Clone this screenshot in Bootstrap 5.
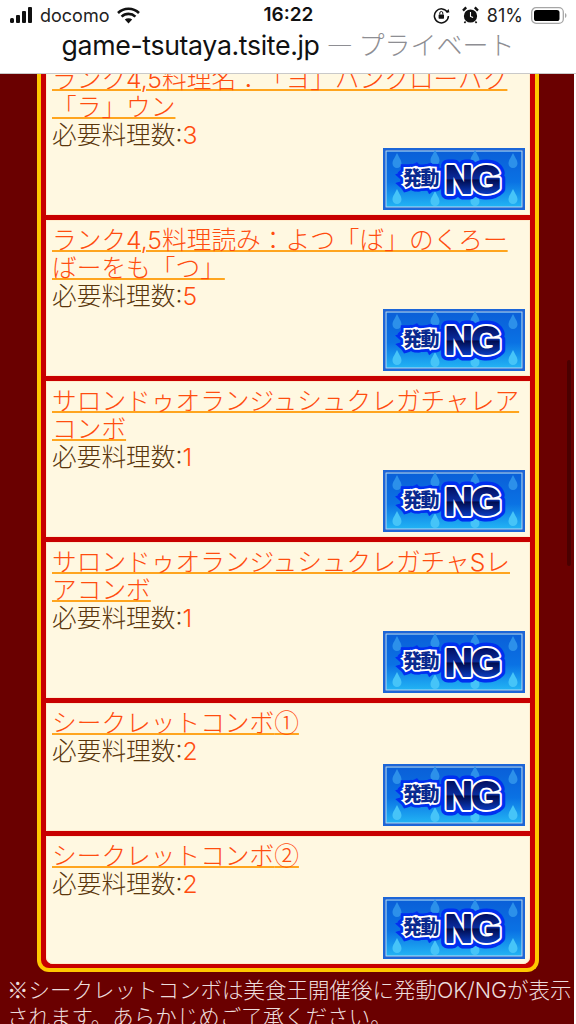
<!DOCTYPE html>
<html lang="ja">
<head>
<meta charset="utf-8">
<title>game-tsutaya</title>
<link rel="stylesheet" href="https://cdn.jsdelivr.net/npm/bootstrap@5.3.0/dist/css/bootstrap.min.css">
<style>
html,body{height:1024px;overflow:hidden;background:#fff;margin:0}
body{font-family:"Noto Sans CJK JP","Liberation Sans",sans-serif;text-spacing-trim:space-all}
.phone-top{height:74px;background:#fff;border-bottom:1px solid #c9c9c9;position:relative;z-index:2}
.status-row{height:30px;padding:0 9px 0 10px;font-family:Inter,"Liberation Sans",sans-serif;font-size:18px;color:#222}
.status-side{width:200px}
.clock{font-weight:600;font-size:19px;color:#111}
.url-row{font-family:Inter,"Noto Sans CJK JP",sans-serif;font-size:26.7px;line-height:30px;color:#111;letter-spacing:-.35px}
.url-private{color:#8e8e93;font-family:"Noto Sans CJK JP",sans-serif;font-weight:300;letter-spacing:0;font-size:26px;line-height:1}
.viewport{width:574px;height:950px;background:#6a0000;overflow:hidden;position:relative}
.frame{margin:-15px 35px 0 37px;border:4px solid #ffc800;border-top:0;border-radius:0 0 12px 12px;background:#c80000;padding:0 5px 4px;gap:5px}
.entry{background:#fff8e1;padding:6px 6px 5px;box-shadow:inset 0 0 0 1px #ffeccd;color:#5a360c;font-family:Inter,"Noto Sans CJK JP",sans-serif;font-size:24.7px;line-height:28px;font-weight:300}
.entry:last-child{border-radius:0 0 7px 7px}
.entry a{color:#ff4d0f;text-decoration:underline;text-decoration-color:#ffa51e;text-decoration-thickness:2px;text-underline-offset:1px}
.count{color:#ff4d0f}
.cjk-mark{font-family:"Noto Sans CJK JP",sans-serif;line-height:1}
.ng-btn{width:142px;height:62px;display:block;margin:-1px -1px 0 auto}
.ng-small{font-family:"Noto Sans CJK JP",sans-serif;font-weight:900;font-size:19px;letter-spacing:-1.5px;fill:#0a2a90;stroke:#fff;stroke-width:3.5px;paint-order:stroke}
.ng-small-glow{stroke:#0030f0;stroke-width:9px}
.ng-big{font-family:"Liberation Sans",sans-serif;font-weight:700;font-size:38px;letter-spacing:-1px;stroke-linejoin:round;paint-order:stroke;stroke:#0030f0;stroke-width:13px}
.ng-big-white{stroke:#fff;stroke-width:6px;fill:#fff}
.ng-big-dark{stroke:url(#ngText);stroke-width:2px;fill:url(#ngText)}
.note{color:#ecdcdc;font-family:Inter,"Noto Sans CJK JP",sans-serif;font-size:21.5px;line-height:27px;padding:5px 0 0 7px;font-weight:300}
.scroll-thumb{position:absolute;left:567px;top:286px;width:4px;height:206px;border-radius:2px;background:#4a0000}
</style>
</head>
<body>
<header class="phone-top">
  <div class="status-row d-flex align-items-center justify-content-between">
    <div class="status-side d-flex align-items-center gap-1">
      <svg width="26" height="16" viewBox="0 0 26 16"><rect x="0" y="11" width="4" height="5" rx="1.5" fill="#111"/><rect x="6" y="8" width="4" height="8" rx="1" fill="#111"/><rect x="12" y="4" width="4" height="12" rx="1" fill="#111"/><rect x="18" y="0" width="4" height="16" rx="1" fill="#111"/></svg>
      <span>docomo</span>
      <svg class="ms-1" width="23" height="17" viewBox="0 0 23 17"><path d="M1 6a15 15 0 0 1 21 0" fill="none" stroke="#111" stroke-width="2.6"/><path d="M4.6 9.6a10 10 0 0 1 13.8 0" fill="none" stroke="#111" stroke-width="2.6"/><path d="M7.8 12.6 11.5 16.5l3.7-3.9a5.4 5.4 0 0 0-7.4 0z" fill="#111"/></svg>
    </div>
    <div class="clock">16:22</div>
    <div class="status-side d-flex align-items-center justify-content-end gap-1">
      <svg width="17" height="17" viewBox="0 0 17 17"><path d="M14.6 5.6A7 7 0 1 0 15.4 9" fill="none" stroke="#111" stroke-width="1.5"/><path d="M12.8 5 16.4 5.4 15.6 2z" fill="#111"/><rect x="5.6" y="7.5" width="5.4" height="4.2" rx=".6" fill="#111"/><path d="M6.8 7.5V6a1.5 1.5 0 0 1 3 0v1.5" fill="none" stroke="#111" stroke-width="1"/></svg>
      <svg class="ms-2" width="17" height="18" viewBox="0 0 17 18"><circle cx="8.5" cy="10" r="6.6" fill="#111"/><path d="M8.5 6v4.400l2.600 1.200" fill="none" stroke="#fff" stroke-width="1.1"/><path d="M1 4.600 4.200 1.400 M16 4.600 12.800 1.400" stroke="#111" stroke-width="2.4"/><path d="M3.600 15.400 2.400 17 M13.400 15.400 14.600 17" stroke="#111" stroke-width="1.6"/></svg>
      <span class="ms-1">81%</span>
      <svg class="ms-1" width="36" height="17" viewBox="0 0 36 17"><rect x=".7" y=".7" width="31.6" height="15.6" rx="4.4" fill="none" stroke="#a6a6a6" stroke-width="1.3"/><rect x="3" y="3" width="25.5" height="11" rx="2.6" fill="#000"/><path d="M34 6v5a2.600 2.600 0 0 0 1.500-2.500A2.600 2.600 0 0 0 34 6z" fill="#a6a6a6"/></svg>
    </div>
  </div>
  <div class="url-row text-center text-nowrap">game-tsutaya.tsite.jp <span class="url-private">— プライベート</span></div>
</header>

<main class="viewport">
  <section class="frame d-flex flex-column">
    <article class="entry">
      <a href="#">ランク4,5料理名：「ヨ」ハンクローバク「ラ」ウン</a><br>必要料理数:<span class="count">3</span>
      <svg class="ng-btn" viewBox="0 0 142 62" role="img" aria-label="発動NG">
        <defs>
          <linearGradient id="ngBg" x1="0" y1="0" x2="0" y2="1"><stop offset="0" stop-color="#0a5fd8"/><stop offset=".55" stop-color="#0a72e4"/><stop offset="1" stop-color="#22b4f4"/></linearGradient>
          <linearGradient id="ngText" gradientUnits="userSpaceOnUse" x1="0" y1="16" x2="0" y2="46"><stop offset="0" stop-color="#000c5c"/><stop offset=".48" stop-color="#0a2c9c"/><stop offset=".54" stop-color="#000c50"/><stop offset="1" stop-color="#0a3cc0"/></linearGradient>
          <path id="ngDrop" d="M0-9C2-4.500 4.500-2 4.500 1.500A4.500 4.500 0 0 1-4.500 1.500C-4.500-2-2-4.500 0-9z"/>
        </defs>
        <g id="ngArt">
          <rect width="142" height="62" fill="#1f3fae"/>
          <rect x="1" y="1" width="140" height="60" fill="none" stroke="#1c66d8" stroke-width="2"/>
          <rect x="3" y="3" width="136" height="56" fill="url(#ngBg)" stroke="#9fd4f6" stroke-width="1.200"/>
          <g fill="#2c90ea"><use href="#ngDrop" x="14" y="14"/><use href="#ngDrop" x="52" y="11"/><use href="#ngDrop" x="92" y="11"/><use href="#ngDrop" x="130" y="14"/></g>
          <g fill="#46c4f8"><use href="#ngDrop" x="14" y="50"/><use href="#ngDrop" x="52" y="52"/><use href="#ngDrop" x="92" y="52"/><use href="#ngDrop" x="130" y="50"/></g>
          <text class="ng-big" x="62" y="45">NG</text>
          <text class="ng-small ng-small-glow" x="20" y="37">発動</text>
          <text class="ng-small" x="20" y="37">発動</text>
          <text class="ng-big ng-big-white" x="62" y="45">NG</text>
          <text class="ng-big ng-big-dark" x="62" y="45">NG</text>
        </g>
      </svg>
    </article>
    <article class="entry">
      <a href="#">ランク4,5料理読み：よつ「ば」のくろーばーをも「つ」</a><br>必要料理数:<span class="count">5</span>
      <svg class="ng-btn" viewBox="0 0 142 62" role="img" aria-label="発動NG"><use href="#ngArt"/></svg>
    </article>
    <article class="entry">
      <a href="#">サロンドゥオランジュシュクレガチャレアコンボ</a><br>必要料理数:<span class="count">1</span>
      <svg class="ng-btn" viewBox="0 0 142 62" role="img" aria-label="発動NG"><use href="#ngArt"/></svg>
    </article>
    <article class="entry">
      <a href="#">サロンドゥオランジュシュクレガチャSレアコンボ</a><br>必要料理数:<span class="count">1</span>
      <svg class="ng-btn" viewBox="0 0 142 62" role="img" aria-label="発動NG"><use href="#ngArt"/></svg>
    </article>
    <article class="entry">
      <a href="#">シークレットコンボ<span class="cjk-mark">①</span></a><br>必要料理数:<span class="count">2</span>
      <svg class="ng-btn" viewBox="0 0 142 62" role="img" aria-label="発動NG"><use href="#ngArt"/></svg>
    </article>
    <article class="entry">
      <a href="#">シークレットコンボ<span class="cjk-mark">②</span></a><br>必要料理数:<span class="count">2</span>
      <svg class="ng-btn" viewBox="0 0 142 62" role="img" aria-label="発動NG"><use href="#ngArt"/></svg>
    </article>
  </section>
  <p class="note mb-0"><span class="cjk-mark">※</span>シークレットコンボは美食王開催後に発動OK/NGが表示されます。あらかじめご了承ください。</p>
  <div class="scroll-thumb"></div>
</main>
<script src="https://cdn.jsdelivr.net/npm/bootstrap@5.3.0/dist/js/bootstrap.bundle.min.js"></script>
</body>
</html>
